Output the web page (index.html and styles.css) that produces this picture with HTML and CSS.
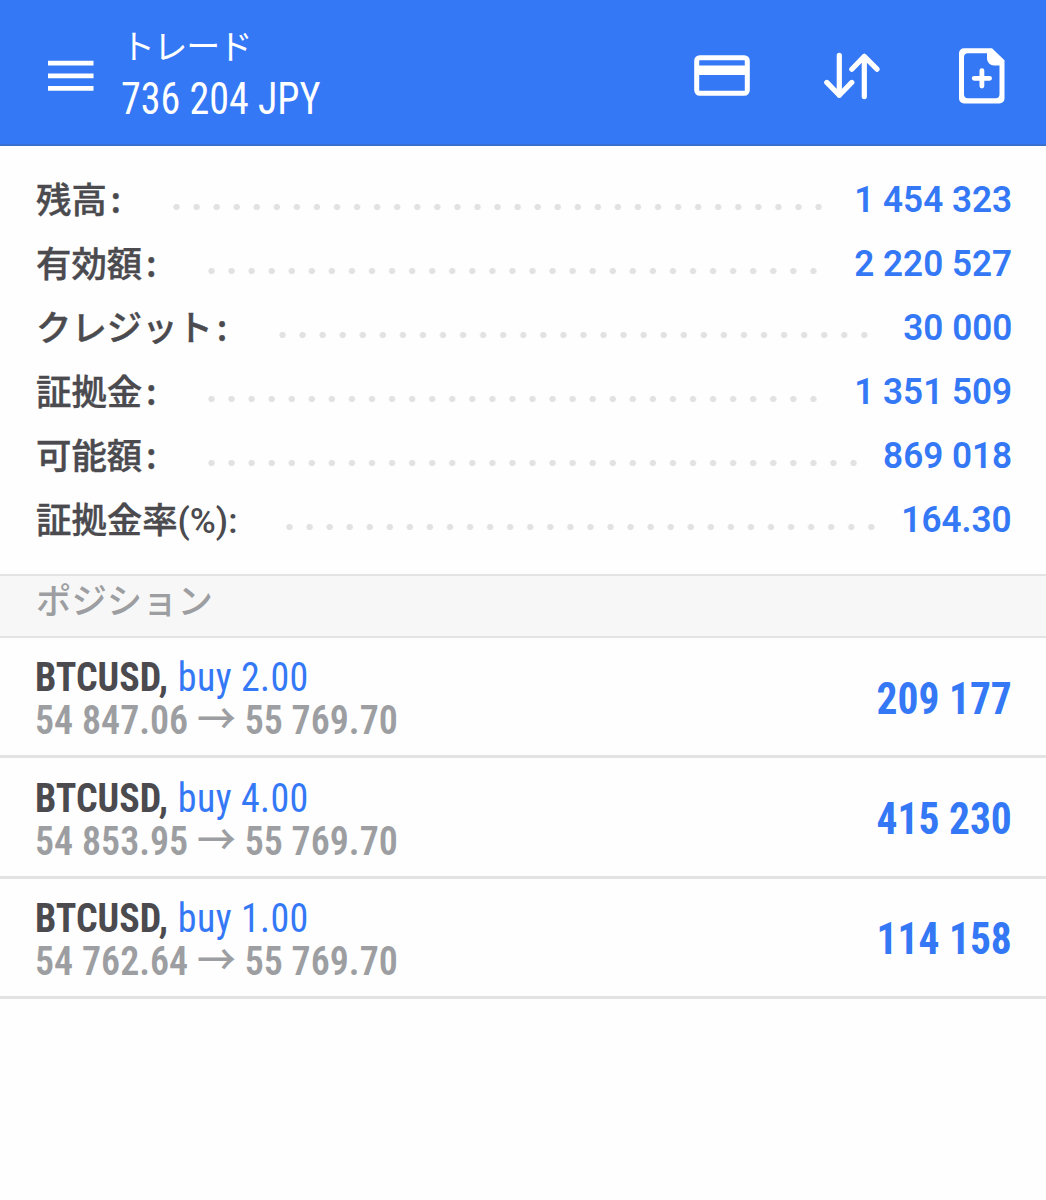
FILE: index.html
```html
<!DOCTYPE html>
<html lang="ja">
    <head>
        <meta charset="utf-8">
        <title>トレード</title>
        <link rel="stylesheet" href="styles.css">
    </head>
    <body>
        <header>
            <svg class="menu" width="46" height="32" viewBox="0 0 46 32">
                <path d="M0 3.2h45.5M0 15.8h45.5M0 28.4h45.5" stroke="#fff" stroke-width="4.8"/>
            </svg>
            <div class="title">
                <h1>トレード</h1>
                <div class="total">736 204 JPY</div>
            </div>
            <div class="actions">
                <svg width="56" height="58" viewBox="0 0 56 58">
                    <rect x="2.7" y="10.7" width="50.6" height="35.6" rx="3" fill="none" stroke="#fff" stroke-width="5"/>
                    <path d="M3 23.2h50" stroke="#fff" stroke-width="9.5"/>
                </svg>
                <svg width="56" height="58" viewBox="0 0 56 58" fill="none" stroke="#fff" stroke-width="5.2" stroke-linecap="round" stroke-linejoin="round">
                    <path d="M15.3 8.3v40M2.8 35.4l12.5 12.8 12.5-12.8M40.3 49.6V9.4M27.8 22.2L40.3 9.4l12.7 12.8"/>
                </svg>
                <svg width="46" height="58" viewBox="0 0 46 58">
                    <path fill="#fff" fill-rule="evenodd" d="M5 1.3h28l12.5 12V51.5a5 5 0 0 1-5 5H5a5 5 0 0 1-5-5V6.3a5 5 0 0 1 5-5zM9 6.3a4 4 0 0 0-4 4v37a4 4 0 0 0 4 4h27.5a4 4 0 0 0 4-4V18.5h-5.5a7 7 0 0 1-7-7V6.3z"/>
                    <path d="M15.2 31.3h15.4M22.9 23.6V39" stroke="#fff" stroke-width="4.8" stroke-linecap="round"/>
                </svg>
            </div>
        </header>

        <div id="account">
            <div class="line">
                <span class="label">残高<span class="colon">:</span></span>
                <span class="dots"></span>
                <span class="value">1 454 323</span>
            </div>
            <div class="line">
                <span class="label">有効額<span class="colon">:</span></span>
                <span class="dots"></span>
                <span class="value">2 220 527</span>
            </div>
            <div class="line">
                <span class="label">クレジット<span class="colon">:</span></span>
                <span class="dots"></span>
                <span class="value">30 000</span>
            </div>
            <div class="line">
                <span class="label">証拠金<span class="colon">:</span></span>
                <span class="dots"></span>
                <span class="value">1 351 509</span>
            </div>
            <div class="line">
                <span class="label">可能額<span class="colon">:</span></span>
                <span class="dots"></span>
                <span class="value">869 018</span>
            </div>
            <div class="line">
                <span class="label">証拠金率<span class="percent">(%):</span></span>
                <span class="dots"></span>
                <span class="value">164.30</span>
            </div>
        </div>

        <h2>ポジション</h2>

        <div id="positions">
            <div class="position">
                <div class="info">
                    <div class="symbol">BTCUSD, <span class="side">buy 2.00</span></div>
                    <div class="prices">54 847.06 <span class="arrow">→</span> 55 769.70</div>
                </div>
                <div class="profit">209 177</div>
            </div>
            <div class="position">
                <div class="info">
                    <div class="symbol">BTCUSD, <span class="side">buy 4.00</span></div>
                    <div class="prices">54 853.95 <span class="arrow">→</span> 55 769.70</div>
                </div>
                <div class="profit">415 230</div>
            </div>
            <div class="position">
                <div class="info">
                    <div class="symbol">BTCUSD, <span class="side">buy 1.00</span></div>
                    <div class="prices">54 762.64 <span class="arrow">→</span> 55 769.70</div>
                </div>
                <div class="profit">114 158</div>
            </div>
        </div>
    </body>
</html>
```
FILE: styles.css
```css
* {
    box-sizing: border-box;
}
body {
    background-color: #fefefe;
    margin: 0;
    font-family: Roboto, "Noto Sans CJK JP", sans-serif;
    color: #4a4a4f;
}
header {
    display: flex;
    align-items: center;
    height: 146px;
    padding: 0 41px 0 48px;
    background-color: #3478f6;
    border-bottom: 2px solid #3a6fd0;
    color: white;
}
.menu {
    margin-top: 8px;
}
.title {
    margin: 4px 0 0 27px;
    font-stretch: 75%;
}
h1 {
    margin: 0;
    font-size: 34px;
    font-weight: 400;
    line-height: 50px;
    letter-spacing: -1.4px;
}
.total {
    font-size: 44px;
    line-height: 54px;
    transform: scaleX(0.91);
    transform-origin: left;
}
.actions {
    display: flex;
    margin: 7px 0 0 auto;
}
.actions svg:nth-child(2) {
    margin: 0 79px 0 74px;
}

#account {
    padding: 22px 34px 0 36px;
    height: 428px;
}
.line {
    display: flex;
    height: 64px;
    line-height: 64px;
}
.label {
    font-family: "Noto Sans CJK JP", sans-serif;
    font-size: 35.4px;
    font-weight: 500;
    line-height: 59px;
    -webkit-text-stroke: 0.4px #4a4a4f;
}
.colon {
    display: inline-block;
    width: 18px;
    text-align: center;
}
.percent {
    font-family: Roboto, sans-serif;
    -webkit-text-stroke: 0;
}
.dots {
    flex: 1;
    margin: 0 19px 0 48px;
    background: radial-gradient(circle at 3.5px 39px, #e2e2e2 2.8px, transparent 3.5px) 0 0 / 20.07px 64px repeat-x;
}
.value {
    font-size: 36.5px;
    font-weight: 600;
    color: #3478f6;
    transform: scaleX(0.962);
    transform-origin: right;
}

h2 {
    margin: 0;
    height: 64px;
    padding-left: 36px;
    background-color: #f7f7f7;
    border: solid #e3e3e3;
    border-width: 2px 0;
    font-family: "Noto Sans CJK JP", sans-serif;
    font-size: 35.4px;
    font-weight: 500;
    line-height: 45px;
    color: #9d9ea1;
}

.position {
    display: flex;
    align-items: center;
    justify-content: space-between;
    height: 120.4px;
    padding: 0 34px 0 35px;
    border-bottom: 3px solid #e3e3e3;
    font-size: 41px;
    line-height: 43px;
    font-stretch: 75%;
}
.info {
    padding-top: 5px;
    transform: scaleX(0.926);
    transform-origin: left;
}
.symbol {
    font-weight: 700;
}
.side {
    margin-left: 1px;
    font-weight: 400;
    letter-spacing: 0.4px;
    color: #3478f6;
}
.prices {
    font-weight: 600;
    color: #9d9ea1;
}
.arrow {
    font-family: "Noto Sans CJK JP", sans-serif;
    font-size: 42px;
    font-weight: 500;
    line-height: 0;
}
.profit {
    padding-top: 3px;
    font-size: 45px;
    font-weight: 700;
    color: #3478f6;
    transform: scaleX(0.922);
    transform-origin: right;
}
```
